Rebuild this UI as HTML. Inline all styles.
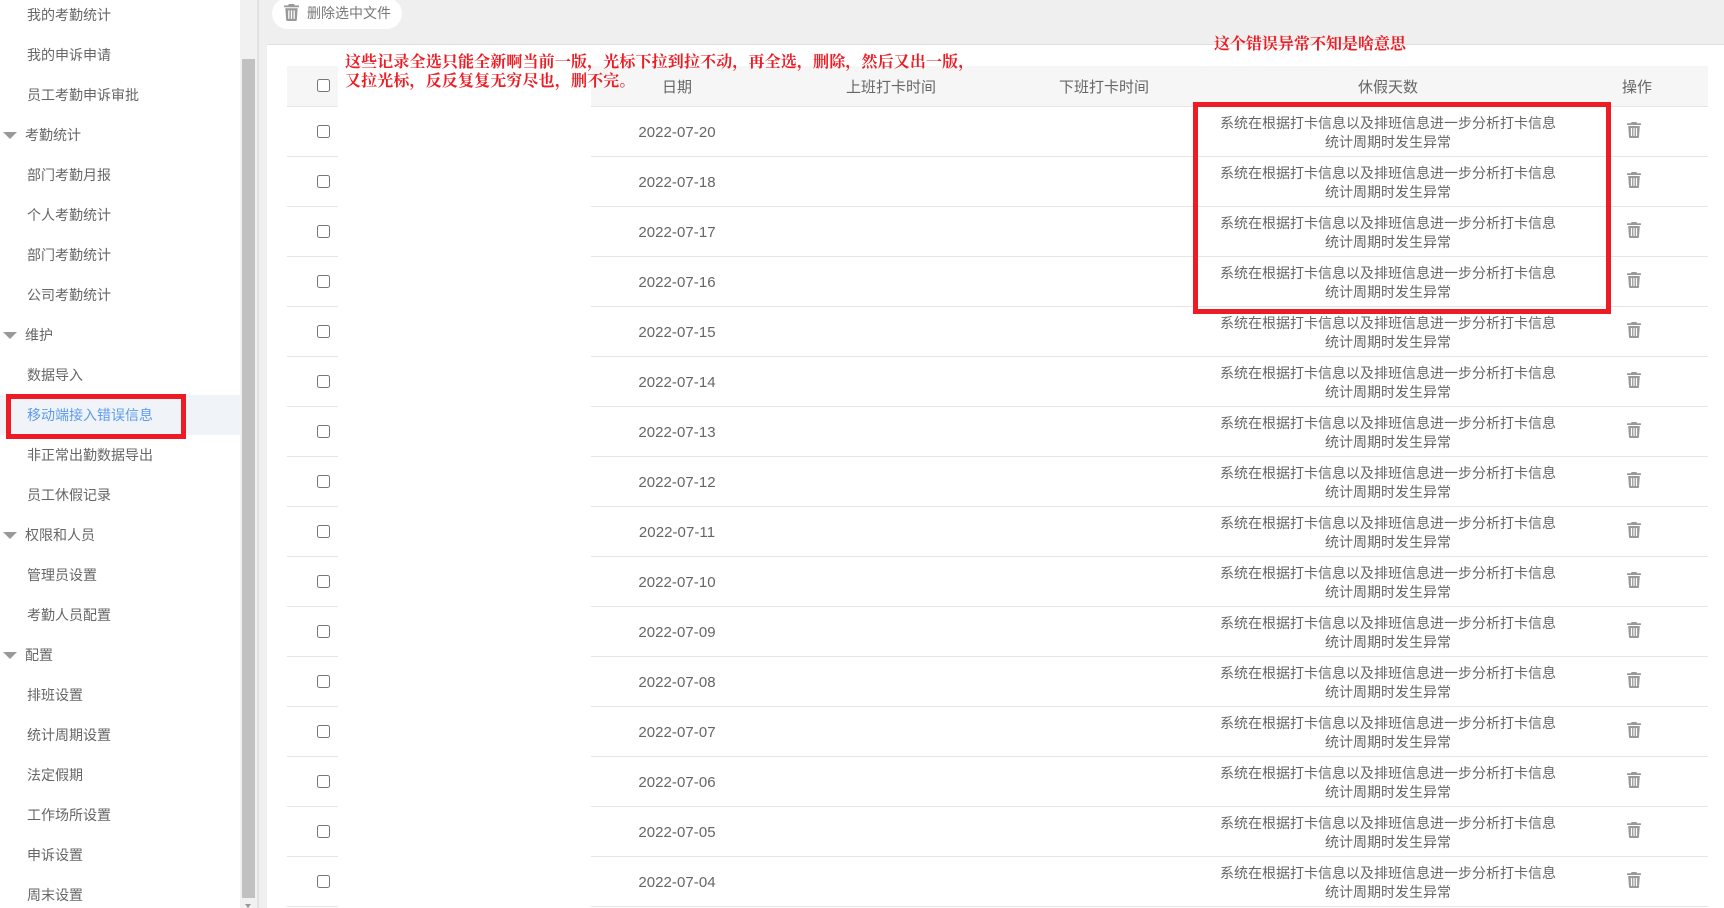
<!DOCTYPE html>
<html lang="zh">
<head>
<meta charset="utf-8">
<title>移动端接入错误信息</title>
<style>
html,body{margin:0;padding:0;width:1724px;height:908px;overflow:hidden;background:#efefef}
*{box-sizing:border-box}
body{font-family:"Liberation Sans","Noto Sans CJK SC",sans-serif;color:#666;font-size:14px;position:relative}
.side{position:absolute;left:0;top:0;width:240px;height:908px;background:#fff;overflow:hidden}
.side div{position:absolute;left:0;width:240px;height:40px;line-height:41px;padding-left:27px;font-size:14px;color:#666}
.side div.g{padding-left:25px}
.side div.g:before{content:"";position:absolute;left:3px;top:17px;border-left:7px solid transparent;border-right:7px solid transparent;border-top:7px solid #999}
.side div.on{background:#f0f4f8;color:#5b9bec}
.track{position:absolute;left:240px;top:0;width:17px;height:908px;background:#f1f1f1}
.thumb{position:absolute;left:242px;top:59px;width:13px;height:839px;background:#c1c1c1}
.sarrow{position:absolute;left:245px;top:904px;border-left:3.5px solid transparent;border-right:3.5px solid transparent;border-top:4px solid #999}
.divd{position:absolute;left:257px;top:0;width:2px;height:908px;background:#e2e2e2}
.main{position:absolute;left:267px;top:44px;width:1457px;height:864px;background:#fff;border-top:1px solid #e0e0e0}
.btn{position:absolute;left:272px;top:-2px;width:130px;height:31px;background:#fff;border-radius:15.5px;line-height:31px;padding-left:35px;font-size:14px;color:#777}
.btn svg{position:absolute;left:12px;top:6px}
.head{position:absolute;left:287px;top:66px;width:1421px;height:41px;background:#f6f6f6;border-bottom:1px solid #e6e6e6}
.head span{position:absolute;top:2px;line-height:40px;font-size:15px;color:#666;transform:translateX(-50%);white-space:nowrap}
.cb{position:absolute;left:30px;width:13px;height:13px;border:1px solid #767676;border-radius:2.5px;background:#fff}
.rows{position:absolute;left:287px;top:107px;width:1421px}
.row{position:relative;height:50px;border-bottom:1px solid #e6e6e6;background:#fff}
.row .cb{top:18px}
.d{position:absolute;left:390px;width:90px;margin-left:-45px;text-align:center;top:1px;line-height:49px;font-size:15px;letter-spacing:.06px;color:#666}
.t{position:absolute;left:851px;width:500px;top:7px;line-height:19px;text-align:center;font-size:14px;color:#666}
.row svg{position:absolute;left:1340px;top:15px}
.mask{position:absolute;left:338px;top:45px;width:253px;height:863px;background:#fff}
.note{position:absolute;font-family:"Noto Serif CJK SC","Liberation Serif",serif;font-weight:700;font-size:16px;line-height:19px;color:#ed1c24;white-space:nowrap}
.box{position:absolute;border:5px solid #ed1c24;background:transparent}
</style>
</head>
<body>
<svg width="0" height="0" style="position:absolute"><defs><symbol id="tr" viewBox="0 0 14 16"><path fill="#999" fill-rule="evenodd" d="M4.500 0h5l.5 1.300h3.500q.5 0 .5.500V3H0V1.800q0-.5.500-.5H4zM1.200 4h11.600l-.8 11q-.1 1-1 1H3q-.9 0-1-1zM3.900 6v8h1.200V6zM6.400 6v8h1.200V6zM8.900 6v8h1.200V6z"/></symbol></defs></svg>
<div class="main"></div>
<div class="head">
<div class="cb" style="top:13px"></div>
<span style="left:390px">日期</span>
<span style="left:604px">上班打卡时间</span>
<span style="left:817px">下班打卡时间</span>
<span style="left:1101px">休假天数</span>
<span style="left:1350px">操作</span>
</div>
<div class="rows">
<div class="row"><div class="cb"></div><div class="d">2022-07-20</div><div class="t">系统在根据打卡信息以及排班信息进一步分析打卡信息<br>统计周期时发生异常</div><svg width="14" height="16"><use href="#tr"/></svg></div>
<div class="row"><div class="cb"></div><div class="d">2022-07-18</div><div class="t">系统在根据打卡信息以及排班信息进一步分析打卡信息<br>统计周期时发生异常</div><svg width="14" height="16"><use href="#tr"/></svg></div>
<div class="row"><div class="cb"></div><div class="d">2022-07-17</div><div class="t">系统在根据打卡信息以及排班信息进一步分析打卡信息<br>统计周期时发生异常</div><svg width="14" height="16"><use href="#tr"/></svg></div>
<div class="row"><div class="cb"></div><div class="d">2022-07-16</div><div class="t">系统在根据打卡信息以及排班信息进一步分析打卡信息<br>统计周期时发生异常</div><svg width="14" height="16"><use href="#tr"/></svg></div>
<div class="row"><div class="cb"></div><div class="d">2022-07-15</div><div class="t">系统在根据打卡信息以及排班信息进一步分析打卡信息<br>统计周期时发生异常</div><svg width="14" height="16"><use href="#tr"/></svg></div>
<div class="row"><div class="cb"></div><div class="d">2022-07-14</div><div class="t">系统在根据打卡信息以及排班信息进一步分析打卡信息<br>统计周期时发生异常</div><svg width="14" height="16"><use href="#tr"/></svg></div>
<div class="row"><div class="cb"></div><div class="d">2022-07-13</div><div class="t">系统在根据打卡信息以及排班信息进一步分析打卡信息<br>统计周期时发生异常</div><svg width="14" height="16"><use href="#tr"/></svg></div>
<div class="row"><div class="cb"></div><div class="d">2022-07-12</div><div class="t">系统在根据打卡信息以及排班信息进一步分析打卡信息<br>统计周期时发生异常</div><svg width="14" height="16"><use href="#tr"/></svg></div>
<div class="row"><div class="cb"></div><div class="d">2022-07-11</div><div class="t">系统在根据打卡信息以及排班信息进一步分析打卡信息<br>统计周期时发生异常</div><svg width="14" height="16"><use href="#tr"/></svg></div>
<div class="row"><div class="cb"></div><div class="d">2022-07-10</div><div class="t">系统在根据打卡信息以及排班信息进一步分析打卡信息<br>统计周期时发生异常</div><svg width="14" height="16"><use href="#tr"/></svg></div>
<div class="row"><div class="cb"></div><div class="d">2022-07-09</div><div class="t">系统在根据打卡信息以及排班信息进一步分析打卡信息<br>统计周期时发生异常</div><svg width="14" height="16"><use href="#tr"/></svg></div>
<div class="row"><div class="cb"></div><div class="d">2022-07-08</div><div class="t">系统在根据打卡信息以及排班信息进一步分析打卡信息<br>统计周期时发生异常</div><svg width="14" height="16"><use href="#tr"/></svg></div>
<div class="row"><div class="cb"></div><div class="d">2022-07-07</div><div class="t">系统在根据打卡信息以及排班信息进一步分析打卡信息<br>统计周期时发生异常</div><svg width="14" height="16"><use href="#tr"/></svg></div>
<div class="row"><div class="cb"></div><div class="d">2022-07-06</div><div class="t">系统在根据打卡信息以及排班信息进一步分析打卡信息<br>统计周期时发生异常</div><svg width="14" height="16"><use href="#tr"/></svg></div>
<div class="row"><div class="cb"></div><div class="d">2022-07-05</div><div class="t">系统在根据打卡信息以及排班信息进一步分析打卡信息<br>统计周期时发生异常</div><svg width="14" height="16"><use href="#tr"/></svg></div>
<div class="row"><div class="cb"></div><div class="d">2022-07-04</div><div class="t">系统在根据打卡信息以及排班信息进一步分析打卡信息<br>统计周期时发生异常</div><svg width="14" height="16"><use href="#tr"/></svg></div>
</div>
<div class="mask"></div>
<div class="side">
<div style="top:-5px">我的考勤统计</div>
<div style="top:35px">我的申诉申请</div>
<div style="top:75px">员工考勤申诉审批</div>
<div class="g" style="top:115px">考勤统计</div>
<div style="top:155px">部门考勤月报</div>
<div style="top:195px">个人考勤统计</div>
<div style="top:235px">部门考勤统计</div>
<div style="top:275px">公司考勤统计</div>
<div class="g" style="top:315px">维护</div>
<div style="top:355px">数据导入</div>
<div class="on" style="top:395px">移动端接入错误信息</div>
<div style="top:435px">非正常出勤数据导出</div>
<div style="top:475px">员工休假记录</div>
<div class="g" style="top:515px">权限和人员</div>
<div style="top:555px">管理员设置</div>
<div style="top:595px">考勤人员配置</div>
<div class="g" style="top:635px">配置</div>
<div style="top:675px">排班设置</div>
<div style="top:715px">统计周期设置</div>
<div style="top:755px">法定假期</div>
<div style="top:795px">工作场所设置</div>
<div style="top:835px">申诉设置</div>
<div style="top:875px">周末设置</div>
</div>
<div class="track"></div>
<div class="thumb"></div>
<div class="sarrow"></div>
<div class="divd"></div>
<div class="btn"><svg width="15" height="17"><use href="#tr"/></svg>删除选中文件</div>
<div class="note" style="left:345px;top:51px;letter-spacing:.14px">这些记录全选只能全新啊当前一版，光标下拉到拉不动，再全选，删除，然后又出一版，<br>又拉光标，反反复复无穷尽也，删不完。</div>
<div class="note" style="left:1214px;top:33px">这个错误异常不知是啥意思</div>
<div class="box" style="left:1193px;top:102px;width:418px;height:212px"></div>
<div class="box" style="left:6px;top:394px;width:180px;height:45px"></div>
</body>
</html>
